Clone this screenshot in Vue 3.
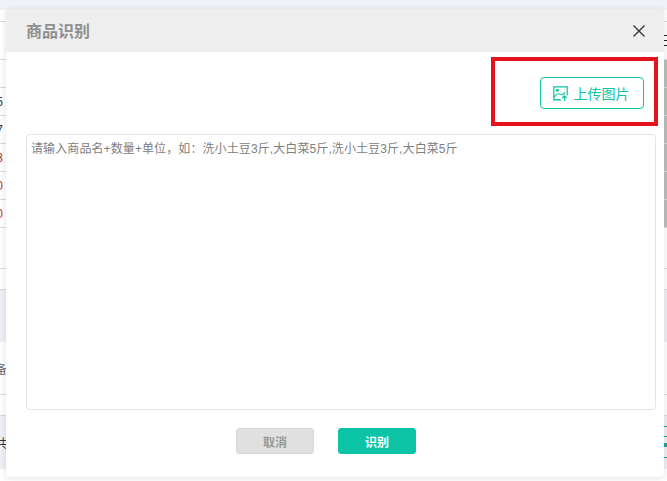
<script setup>
const rows = [
  { h: 12 },
  { h: 38, bars: true },
  { h: 28, left: '', thumb: true },
  { h: 28, left: '5', c: '#334', thumb: true },
  { h: 28, left: '7', c: '#334', thumb: true },
  { h: 28, left: '3', c: '#b5331c', thumb: true },
  { h: 28, left: '0', c: '#b5331c', thumb: true },
  { h: 28, left: '0', c: '#b5331c', thumb: true },
  { h: 41 },
  { h: 21 },
  { h: 52, band: true },
  { h: 53, left: '备', c: '#667', wide: true },
  { h: 21 },
  { h: 53, left: '共', c: '#334', band: true, teal: true, wide: true }
]
</script>

<template>
  <div class="page">
    <div class="backdrop">
      <div class="top-band"></div>
      <div
        v-for="(r, i) in rows"
        :key="i"
        class="row"
        :class="{ band: r.band }"
        :style="{ height: r.h + 'px' }"
      >
        <div class="cell-left" :class="{ wide: r.wide }" :style="{ color: r.c }"><span>{{ r.left }}</span></div>
        <div class="cell-right" :class="{ thumb: r.thumb }">
          <template v-if="r.bars"><i class="bar"></i><i class="bar"></i><i class="bar"></i></template>
          <template v-if="r.teal"><i class="tl t1"></i><i class="tl t2"></i><i class="tb"></i><i class="tl t3"></i></template>
        </div>
      </div>
    </div>

    <section class="dialog">
      <header class="dialog-head">
        <h2 class="title">商品识别</h2>
        <svg class="close" width="14" height="14" viewBox="0 0 14 14" aria-label="关闭">
          <path d="M1.500 1.500 12.500 12.500M12.500 1.500 1.500 12.500" stroke="#33343f" stroke-width="1.4" fill="none" />
        </svg>
      </header>
      <div class="dialog-body">
        <div class="upload-row">
          <button class="upload" type="button">
            <svg class="pic" width="15" height="15" viewBox="0 0 15 15" fill="none" stroke="#0cc3a5" stroke-width="1.2">
              <path d="M8.500 14H.8V.8h13.400v8.700" />
              <circle cx="4.300" cy="4.300" r="1.500" fill="#0cc3a5" stroke="none" />
              <path d="M1 11.500c2-3 3.500-4.500 5.500-3.500s3 1.500 5.500-1.500" />
              <path d="M1 13.500h6M11.500 15v-5M9.300 12l2.200-2.200 2.200 2.200" />
            </svg>
            <span>上传图片</span>
          </button>
        </div>
        <textarea class="input" placeholder="请输入商品名+数量+单位，如：洗小土豆3斤,大白菜5斤,洗小土豆3斤,大白菜5斤"></textarea>
        <div class="actions">
          <button class="btn cancel" type="button">取消</button>
          <button class="btn ok" type="button">识别</button>
        </div>
      </div>
      <div class="highlight"></div>
    </section>
  </div>
</template>

<style>
html, body { margin: 0; background: #fff; }
</style>

<style scoped>
.page {
  position: relative;
  width: 667px;
  height: 481px;
  overflow: hidden;
  font-family: "Liberation Sans", "Noto Sans CJK SC", sans-serif;
}
.top-band { height: 10px; background: #f0f2f8; }
.row {
  box-sizing: border-box;
  border-bottom: 1px solid #dcdcdc;
  display: flex;
  justify-content: space-between;
  background: #fff;
}
.band { background: #eef0f5; border-bottom-color: transparent; }
.cell-left {
  width: 6px;
  display: flex;
  justify-content: flex-end;
  align-items: center;
  overflow: hidden;
  font-size: 12px;
  white-space: nowrap;
}
.cell-left span { flex: none; margin-right: 3px; }
.cell-left.wide span { margin-right: -1px; }
.cell-right {
  width: 3px;
  display: flex;
  flex-direction: column;
  position: relative;
}
.thumb { background: #bdbfbc; }
.bar { display: block; height: 1px; background: #222; margin-top: 4px; }
.bar:first-child { margin-top: 13px; }
.tl { display: block; height: 1px; background: #0cb39a; }
.t1 { margin-top: 10px; }
.t2 { margin-top: 9px; }
.tb { display: block; height: 4px; margin-top: 6px; background: #0cb39a; }
.t3 { margin-top: 10px; }
.dialog {
  position: absolute;
  left: 6px;
  top: 9px;
  width: 658px;
  height: 468px;
  background: #fff;
  border-radius: 0 0 4px 4px;
  box-shadow: 0 1px 6px rgba(0, 0, 0, .12);
  display: flex;
  flex-direction: column;
}
.dialog-head {
  height: 43px;
  background: #eee;
  display: flex;
  align-items: center;
  justify-content: space-between;
  padding: 0 18px 2px 20px;
  box-sizing: border-box;
  flex: none;
}
.title {
  margin: 0;
  font-size: 16px;
  font-weight: 700;
  color: #8f8f8f;
}
.close { margin-top: 2px; }
.dialog-body {
  flex: 1;
  padding: 25px 8px 23px 20px;
  display: flex;
  flex-direction: column;
}
.upload-row { display: flex; justify-content: flex-end; padding-right: 12px; }
.upload {
  width: 104px;
  height: 32px;
  box-sizing: border-box;
  border: 1px solid #0cc3a5;
  border-radius: 4px;
  background: #fff;
  color: #0cc3a5;
  font: inherit;
  font-size: 14px;
  display: flex;
  align-items: center;
  justify-content: center;
  gap: 6px;
  padding: 0 2px 0 0;
}
.input {
  margin-top: 25px;
  width: 630px;
  height: 276px;
  box-sizing: border-box;
  border: 1px solid #e3e3e3;
  border-radius: 4px;
  padding: 6px 4px;
  font: inherit;
  font-size: 12px;
  line-height: 16px;
  letter-spacing: .1px;
  resize: none;
  outline: none;
}
.input::placeholder { color: #808080; opacity: 1; }
.actions {
  display: flex;
  justify-content: center;
  gap: 24px;
  margin-top: 18px;
  padding-right: 30px;
}
.btn {
  width: 78px;
  height: 26px;
  box-sizing: border-box;
  border-radius: 3px;
  font: inherit;
  font-size: 12px;
  font-weight: 700;
  padding: 0;
}
.cancel { background: #e0e0e0; border: 1px solid #d8d8d8; color: #999; }
.ok { background: #0cc3a5; border: 1px solid #0cc3a5; color: #fff; }
.highlight {
  position: absolute;
  left: 485px;
  top: 48px;
  width: 167px;
  height: 69px;
  box-sizing: border-box;
  border: 4px solid #e5141c;
  pointer-events: none;
}
</style>
